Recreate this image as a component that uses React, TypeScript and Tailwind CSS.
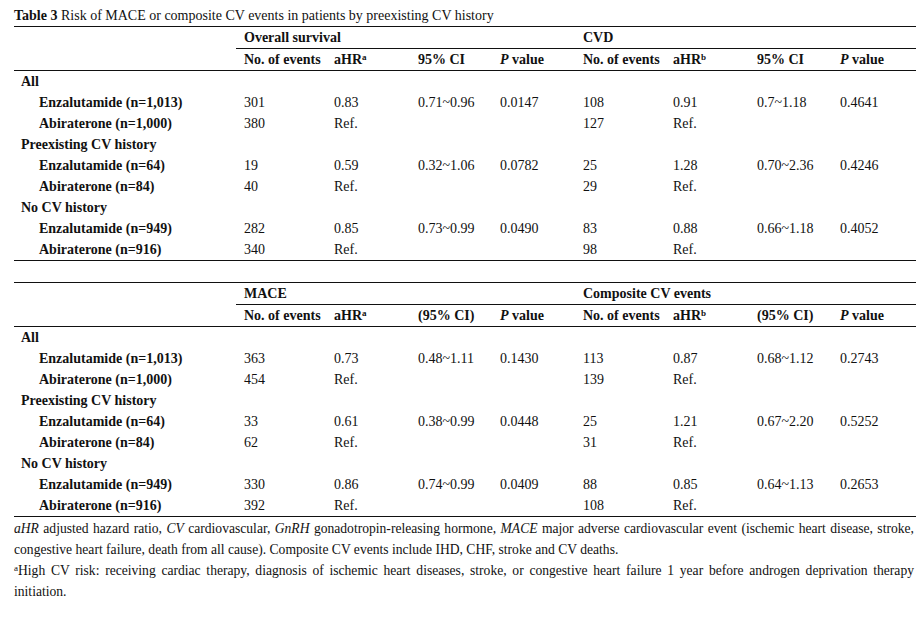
import React from "react";

type Row = { label: string; indent?: boolean; bold?: boolean; v?: string[] };

const widths = ["w-[230px]", "w-[90px]", "w-[84px]", "w-[82px]", "w-[83px]", "w-[90px]", "w-[84px]", "w-[83px]", "w-[76px]"];

const t1: Row[] = [
  { label: "All" },
  { label: "Enzalutamide (n=1,013)", indent: true, v: ["301", "0.83", "0.71~0.96", "0.0147", "108", "0.91", "0.7~1.18", "0.4641"] },
  { label: "Abiraterone (n=1,000)", indent: true, v: ["380", "Ref.", "", "", "127", "Ref.", "", ""] },
  { label: "Preexisting CV history" },
  { label: "Enzalutamide (n=64)", indent: true, v: ["19", "0.59", "0.32~1.06", "0.0782", "25", "1.28", "0.70~2.36", "0.4246"] },
  { label: "Abiraterone (n=84)", indent: true, v: ["40", "Ref.", "", "", "29", "Ref.", "", ""] },
  { label: "No CV history" },
  { label: "Enzalutamide (n=949)", indent: true, v: ["282", "0.85", "0.73~0.99", "0.0490", "83", "0.88", "0.66~1.18", "0.4052"] },
  { label: "Abiraterone (n=916)", indent: true, v: ["340", "Ref.", "", "", "98", "Ref.", "", ""] },
];

const t2: Row[] = [
  { label: "All" },
  { label: "Enzalutamide (n=1,013)", indent: true, v: ["363", "0.73", "0.48~1.11", "0.1430", "113", "0.87", "0.68~1.12", "0.2743"] },
  { label: "Abiraterone (n=1,000)", indent: true, v: ["454", "Ref.", "", "", "139", "Ref.", "", ""] },
  { label: "Preexisting CV history" },
  { label: "Enzalutamide (n=64)", indent: true, v: ["33", "0.61", "0.38~0.99", "0.0448", "25", "1.21", "0.67~2.20", "0.5252"] },
  { label: "Abiraterone (n=84)", indent: true, v: ["62", "Ref.", "", "", "31", "Ref.", "", ""] },
  { label: "No CV history" },
  { label: "Enzalutamide (n=949)", indent: true, v: ["330", "0.86", "0.74~0.99", "0.0409", "88", "0.85", "0.64~1.13", "0.2653"] },
  { label: "Abiraterone (n=916)", indent: true, v: ["392", "Ref.", "", "", "108", "Ref.", "", ""] },
];

function Sup({ c }: { c: string }) {
  return <sup className="text-[9px] top-[-0.5em]">{c}</sup>;
}

function DataRows({ rows }: { rows: Row[] }) {
  return (
    <>
      {rows.map((r, i) => (
        <div key={i} className="flex h-[21px] items-center">
          <div className={`${widths[0]} shrink-0 font-bold whitespace-nowrap ${r.indent ? "pl-[25px]" : "pl-[7px]"}`}>{r.label}</div>
          {(r.v ?? ["", "", "", "", "", "", "", ""]).map((c, j) => (
            <div key={j} className={`${widths[j + 1]} shrink-0 whitespace-nowrap`}>{c}</div>
          ))}
        </div>
      ))}
    </>
  );
}

function Header({ a, b, ci }: { a: string; b: string; ci: string }) {
  return (
    <>
      <div className="flex h-[21px] items-center font-bold">
        <div className={`${widths[0]} shrink-0`} />
        <div className="w-[339px] shrink-0">{a}</div>
        <div>{b}</div>
      </div>
      <div className="ml-[222px] border-b border-[#111]" />
      <div className="flex h-[21px] items-center font-bold whitespace-nowrap">
        <div className={`${widths[0]} shrink-0`} />
        <div className={`${widths[1]} shrink-0`}>No. of events</div>
        <div className={`${widths[2]} shrink-0`}>
          aHR<Sup c="a" />
        </div>
        <div className={`${widths[3]} shrink-0`}>{ci}</div>
        <div className={`${widths[4]} shrink-0`}>
          <i>P</i> value
        </div>
        <div className={`${widths[5]} shrink-0`}>No. of events</div>
        <div className={`${widths[6]} shrink-0`}>
          aHR<Sup c="b" />
        </div>
        <div className={`${widths[7]} shrink-0`}>{ci}</div>
        <div className={`${widths[8]} shrink-0`}>
          <i>P</i> value
        </div>
      </div>
    </>
  );
}

export default function App() {
  return (
    <div
      className="w-[916px] h-[624px] bg-white text-[#111] text-[14px] leading-[21px] overflow-hidden"
      style={{ fontFamily: '"Liberation Serif", "Times New Roman", serif' }}
    >
      <div className="pl-[14px] pt-[5px] h-[26px] whitespace-nowrap">
        <b>Table 3</b> Risk of MACE or composite CV events in patients by preexisting CV history
      </div>
      <div className="ml-[14px]">
        <div className="border-b border-[#111]" />
        <Header a="Overall survival" b="CVD" ci="95% CI" />
        <div className="border-b border-[#111]" />
        <DataRows rows={t1} />
        <div className="border-b border-[#111]" />
        <div className="h-[21px]" />
        <div className="border-b border-[#111]" />
        <Header a="MACE" b="Composite CV events" ci="(95% CI)" />
        <div className="border-b border-[#111]" />
        <DataRows rows={t2} />
        <div className="border-b border-[#111]" />
        <div className="pr-[2px] pt-[1px] text-justify text-[13.6px]">
          <p>
            <i>aHR</i> adjusted hazard ratio, <i>CV</i> cardiovascular, <i>GnRH</i> gonadotropin-releasing hormone,{" "}
            <i>MACE</i> major adverse cardiovascular event (ischemic heart disease, stroke, congestive heart failure,
            death from all cause). Composite CV events include IHD, CHF, stroke and CV deaths.
          </p>
          <p>
            <Sup c="a" />High CV risk: receiving cardiac therapy, diagnosis of ischemic heart diseases, stroke, or
            congestive heart failure 1 year before androgen deprivation therapy initiation.
          </p>
        </div>
      </div>
    </div>
  );
}
